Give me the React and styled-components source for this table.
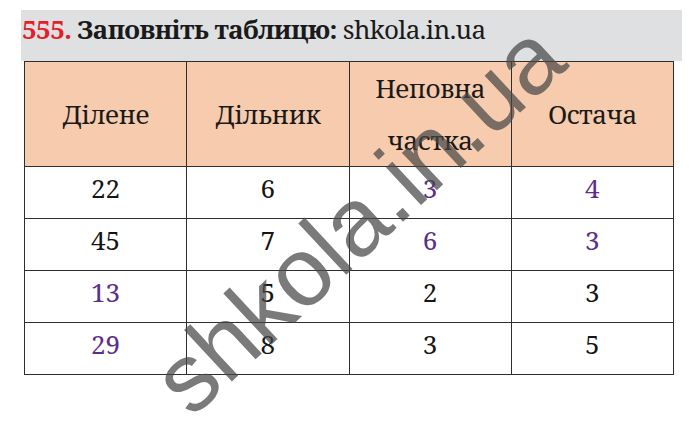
import React from "react";
import styled, { createGlobalStyle } from "styled-components";

const serif = `"Noto Serif", serif`;

const GlobalStyle = createGlobalStyle`
  html, body {
    margin: 0;
    padding: 0;
    background: #fff;
  }
  body {
    width: 700px;
    height: 421px;
    overflow: hidden;
    font-family: ${serif};
    color: #1a1a1a;
  }
`;

const Page = styled.div`
  position: relative;
  width: 700px;
  height: 421px;
  padding-top: 10px;
  box-sizing: border-box;
  overflow: hidden;
`;

const TitleBar = styled.div`
  margin-left: 21px;
  width: 661px;
  height: 51px;
  background: #dfe0e1;
  display: flex;
  align-items: baseline;
  box-sizing: border-box;
  padding: 2px 0 0 1px;
  font-family: ${serif};
  font-size: 26px;
  line-height: 34px;
  letter-spacing: -0.6px;
  white-space: nowrap;
`;

const Number = styled.span`
  color: #e2202a;
  font-weight: bold;
  margin-right: 6px;
`;

const Task = styled.span`
  font-weight: bold;
  margin-right: 6px;
`;

const Site = styled.span`
  font-weight: normal;
`;

const Table = styled.table`
  margin-left: 24px;
  width: 650px;
  border-collapse: collapse;
  table-layout: fixed;
  font-family: ${serif};
`;

const HeadCell = styled.th`
  background: #f7cbad;
  border: 1.5px solid #2e2e2e;
  height: 104px;
  padding: 0;
  font-family: ${serif};
  font-weight: normal;
  font-size: 26px;
  line-height: 52px;
  letter-spacing: -0.5px;
  color: #1a1a1a;
  text-align: center;
  vertical-align: middle;
`;

const Cell = styled.td`
  border: 1.5px solid #2e2e2e;
  height: 52px;
  padding: 0 0 9px;
  box-sizing: border-box;
  font-family: ${serif};
  font-size: 26px;
  line-height: 30px;
  text-align: center;
  vertical-align: middle;
  color: ${(p) => (p.$answer ? "#5b2e8a" : "#151515")};
`;

const Watermark = styled.div`
  position: absolute;
  left: 358px;
  top: 218px;
  transform: translate(-50%, -50%) rotate(-43deg);
  font-family: "Liberation Sans", Arial, sans-serif;
  font-size: 97px;
  line-height: 1;
  color: rgba(70, 70, 70, 0.72);
  white-space: nowrap;
  pointer-events: none;
`;

const rows = [
  [["22"], ["6"], ["3", true], ["4", true]],
  [["45"], ["7"], ["6", true], ["3", true]],
  [["13", true], ["5"], ["2"], ["3"]],
  [["29", true], ["8"], ["3"], ["5"]],
];

export default function App() {
  return (
    <>
      <GlobalStyle />
      <Page>
        <TitleBar>
          <Number>555.</Number>
          <Task>Заповніть таблицю:</Task>
          <Site>shkola.in.ua</Site>
        </TitleBar>
        <Table>
          <thead>
            <tr>
              <HeadCell>Ділене</HeadCell>
              <HeadCell>Дільник</HeadCell>
              <HeadCell>
                Неповна
                <br />
                частка
              </HeadCell>
              <HeadCell>Остача</HeadCell>
            </tr>
          </thead>
          <tbody>
            {rows.map((row, i) => (
              <tr key={i}>
                {row.map(([value, answer], j) => (
                  <Cell key={j} $answer={answer}>
                    {value}
                  </Cell>
                ))}
              </tr>
            ))}
          </tbody>
        </Table>
        <Watermark>shkola.in.ua</Watermark>
      </Page>
    </>
  );
}
